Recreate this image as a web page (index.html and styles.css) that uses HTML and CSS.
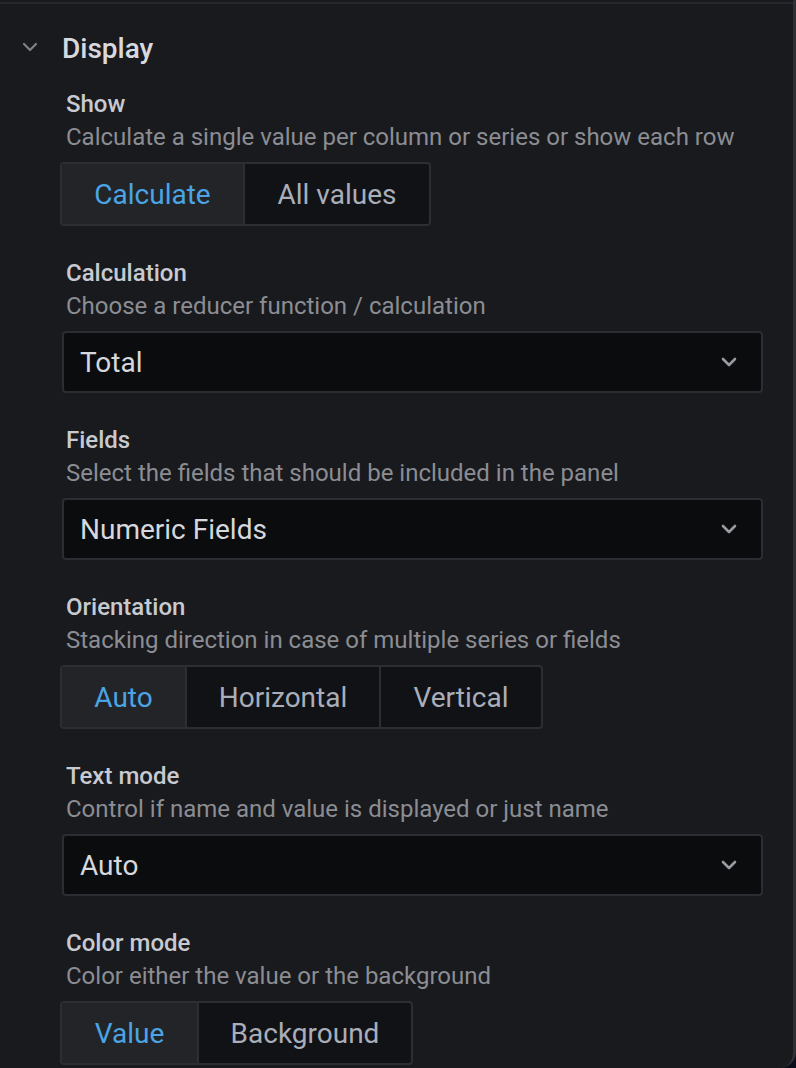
FILE: index.html
```html
<!DOCTYPE html>
<html>
<head>
<meta charset="utf-8">
<link rel="stylesheet" href="styles.css">
</head>
<body>
<div class="panel">
  <div class="topline"></div>
  <div class="section-head">
    <svg class="caret" width="16" height="10" viewBox="0 0 16 10"><path d="M2 2 L8 8 L14 2" fill="none" stroke="currentColor" stroke-width="2.2" stroke-linecap="round" stroke-linejoin="round"/></svg>
    <span class="section-title">Display</span>
  </div>
  <div class="items">
    <div class="item">
      <div class="label">Show</div>
      <div class="desc">Calculate a single value per column or series or show each row</div>
      <div class="radio">
        <div class="seg active w-calc">Calculate</div>
        <div class="seg w-all">All values</div>
      </div>
    </div>
    <div class="item">
      <div class="label">Calculation</div>
      <div class="desc">Choose a reducer function / calculation</div>
      <div class="select"><span>Total</span><svg class="chev" width="16" height="10" viewBox="0 0 16 10"><path d="M2 2 L8 8 L14 2" fill="none" stroke="currentColor" stroke-width="2.6" stroke-linecap="round" stroke-linejoin="round"/></svg></div>
    </div>
    <div class="item">
      <div class="label">Fields</div>
      <div class="desc">Select the fields that should be included in the panel</div>
      <div class="select"><span>Numeric Fields</span><svg class="chev" width="16" height="10" viewBox="0 0 16 10"><path d="M2 2 L8 8 L14 2" fill="none" stroke="currentColor" stroke-width="2.6" stroke-linecap="round" stroke-linejoin="round"/></svg></div>
    </div>
    <div class="item">
      <div class="label">Orientation</div>
      <div class="desc">Stacking direction in case of multiple series or fields</div>
      <div class="radio">
        <div class="seg active w-auto">Auto</div>
        <div class="seg w-hor">Horizontal</div>
        <div class="seg w-ver">Vertical</div>
      </div>
    </div>
    <div class="item">
      <div class="label">Text mode</div>
      <div class="desc">Control if name and value is displayed or just name</div>
      <div class="select"><span>Auto</span><svg class="chev" width="16" height="10" viewBox="0 0 16 10"><path d="M2 2 L8 8 L14 2" fill="none" stroke="currentColor" stroke-width="2.6" stroke-linecap="round" stroke-linejoin="round"/></svg></div>
    </div>
    <div class="item">
      <div class="label">Color mode</div>
      <div class="desc">Color either the value or the background</div>
      <div class="radio">
        <div class="seg active w-val">Value</div>
        <div class="seg w-bg">Background</div>
      </div>
    </div>
  </div>
</div>
</body>
</html>
```

FILE: styles.css
```css
html, body {
  margin: 0;
  padding: 0;
}
body {
  background: #0b0c1c;
  width: 796px;
  height: 1068px;
  overflow: hidden;
  font-family: Roboto, "Liberation Sans", sans-serif;
}
.panel {
  width: 796px;
  height: 1068px;
  box-sizing: border-box;
  background: #181a1e;
  border-right: 3px solid #2e3035;
  border-bottom-right-radius: 16px;
  padding-top: 2px;
}
.topline {
  height: 2px;
  background: #25272c;
}
.section-head {
  display: flex;
  align-items: center;
  height: 84px;
  box-sizing: border-box;
  padding: 29px 0 23px 22px;
}
.caret {
  color: #7f8188;
  margin-right: 24px;
  margin-top: -5px;
}
.section-title {
  font-size: 28px;
  line-height: 32px;
  font-weight: 500;
  color: #d8d9de;
}
.items {
  padding-left: 60px;
  padding-right: 30px;
}
.item {
  margin-bottom: 31px;
}
.label {
  font-size: 24px;
  font-weight: 500;
  color: #c9cad0;
  line-height: 32px;
  padding-left: 6px;
}
.desc {
  font-size: 24px;
  color: #8c8d93;
  line-height: 34px;
  padding-left: 6px;
  margin-bottom: 8px;
}
.radio {
  display: inline-flex;
  height: 64px;
  box-sizing: border-box;
  border: 2px solid #2b2e33;
  border-radius: 4px;
  background: #111216;
  overflow: hidden;
}
.seg {
  display: flex;
  align-items: center;
  justify-content: center;
  font-size: 28px;
  color: #a9aeb8;
  border-left: 2px solid #2b2e33;
}
.seg:first-child {
  border-left: none;
}
.seg.active {
  background: #222428;
  color: #4ba4e4;
}
.w-calc { width: 181px; }
.w-all { width: 184px; }
.w-auto { width: 123px; }
.w-hor { width: 192px; }
.w-ver { width: 160px; }
.w-val { width: 135px; }
.w-bg { width: 212px; }
.select {
  display: flex;
  align-items: center;
  justify-content: space-between;
  margin-left: 2px;
  height: 62px;
  box-sizing: border-box;
  border: 2px solid #2a2d31;
  border-radius: 4px;
  background: #0b0c0e;
  padding: 0 24px 0 16px;
  font-size: 28px;
  color: #d6d8dd;
}
.chev {
  color: #9a9ba1;
}
```
